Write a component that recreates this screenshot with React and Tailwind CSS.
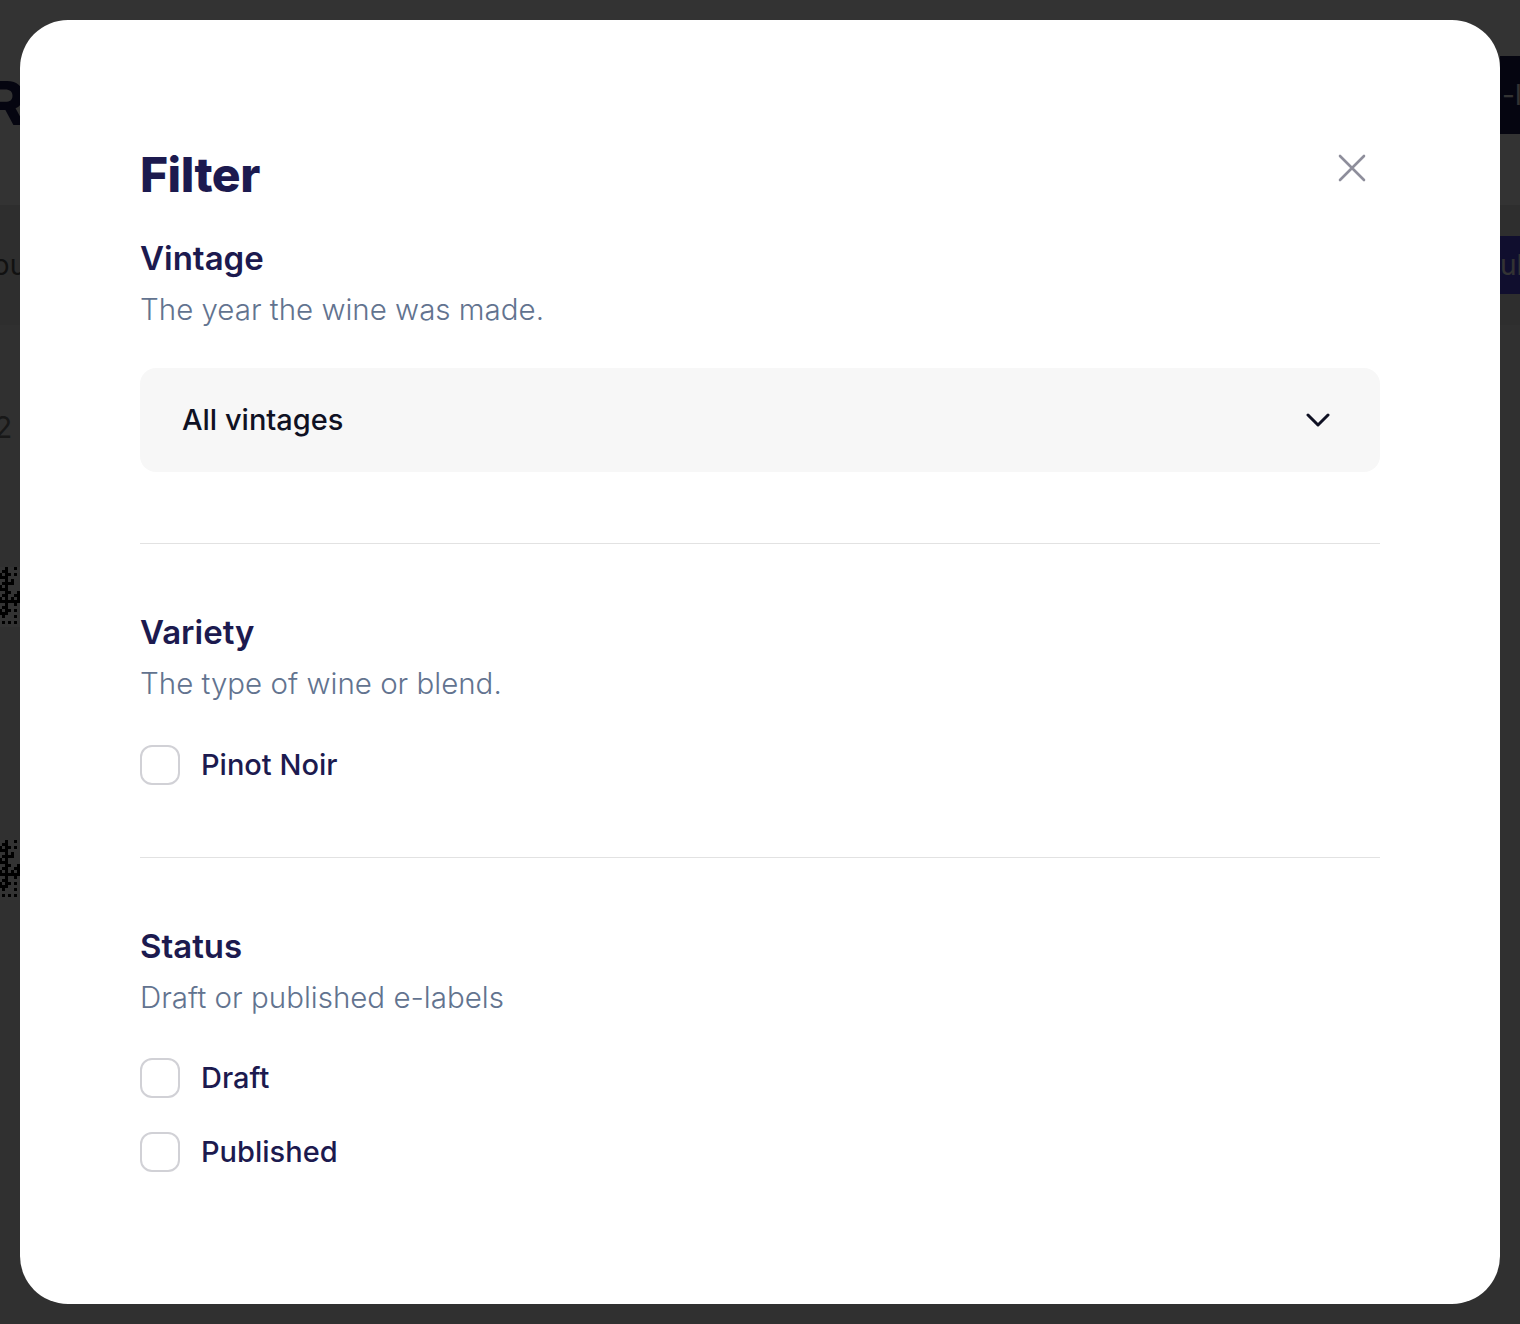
import React, { useState } from 'react';

const font = { fontFamily: 'Inter, "Noto Sans", sans-serif' };

const QrBlock = () => {
    // little pseudo-random pattern standing in for a QR code
    const cells = [];
    for (let y = 0; y < 20; y++) {
        for (let x = 0; x < 20; x++) {
            if ((x * 7 + y * 13 + x * y * 3 + (x ^ y)) % 3 === 0) cells.push(<rect key={`${x}-${y}`} x={x * 3} y={y * 3} width="3" height="3" fill="#000" />);
        }
    }
    return (
        <svg width="60" height="60" viewBox="0 0 60 60" className="shrink-0">
            <rect width="60" height="60" fill="#fff" />
            {cells}
        </svg>
    );
};

const Checkbox = ({ label, checked, onChange }) => (
    <label className="flex items-center gap-[21px] cursor-pointer select-none">
        <span
            onClick={onChange}
            className={`w-[40px] h-[40px] rounded-[12px] border-2 ${checked ? 'border-[#1c1a4f] bg-[#1c1a4f]' : 'border-[#d1d1d6] bg-white'}`}
        />
        <span className="text-[29px] leading-[40px] font-medium text-[#1c1a4f]">{label}</span>
    </label>
);

const Section = ({ title, description, children }) => (
    <div>
        <h3 className="text-[33px] leading-[40px] font-semibold text-[#1c1a4f]">{title}</h3>
        <p className="mt-[11px] text-[29.5px] leading-[40px] font-light text-[#62738f]">{description}</p>
        {children}
    </div>
);

const App = () => {
    const [checked, setChecked] = useState({});
    const toggle = (key) => setChecked((prev) => ({ ...prev, [key]: !prev[key] }));

    return (
        <div className="relative w-[1520px] h-[1324px] overflow-hidden bg-[#f0f0f0]" style={font}>
            {/* page behind the modal */}
            <div className="h-[205px] bg-white flex items-center justify-between">
                <span className="-ml-[14px] text-[60px] font-extrabold text-[#1c1a4f]">R</span>
                <div className="h-[78px] w-[120px] -mr-[100px] -mt-[16px] bg-[#1c1a4f] text-white text-[28px] flex items-center pl-[2px]">-label</div>
            </div>
            <div className="h-[120px] bg-[#e6e6e6] flex items-center justify-between">
                <span className="-ml-[24px] text-[28px] text-[#555]">Your</span>
                <div className="h-[58px] w-[140px] -mr-[120px] bg-[#4f46e5] text-white text-[28px] flex items-center">ublish</div>
            </div>
            <div className="pt-[80px]">
                <span className="-ml-[6px] text-[30px] text-[#777]">2</span>
            </div>
            <div className="mt-[117px] -ml-[40px]"><QrBlock /></div>
            <div className="mt-[213px] -ml-[40px]"><QrBlock /></div>

            {/* overlay */}
            <div className="absolute inset-0 bg-black/80 p-[20px]">
                <div className="h-full bg-white rounded-[48px] px-[120px] pt-[127px]">
                    <div className="flex items-start justify-between">
                        <h2 className="text-[48px] leading-[56px] font-extrabold text-[#1c1a4f] tracking-[-0.5px]">Filter</h2>
                        <button className="mt-[7px] mr-[14px]" aria-label="Close">
                            <svg width="28" height="28" viewBox="0 0 28 28" fill="none" stroke="#8e8e9b" strokeWidth="2.6" strokeLinecap="round">
                                <path d="M2 2L26 26M26 2L2 26" />
                            </svg>
                        </button>
                    </div>

                    <div className="mt-[35px]">
                        <Section title="Vintage" description="The year the wine was made.">
                            <div className="mt-[39px] h-[104px] rounded-[16px] bg-[#f7f7f7] flex items-center justify-between pl-[42px] pr-[50px]">
                                <span className="text-[29px] leading-[40px] font-medium text-[#0f1123]">All vintages</span>
                                <svg width="24" height="14" viewBox="0 0 24 14" fill="none" stroke="#0f1123" strokeWidth="3" strokeLinecap="round" strokeLinejoin="round">
                                    <path d="M2 2L12 12L22 2" />
                                </svg>
                            </div>
                        </Section>
                    </div>

                    <div className="mt-[71px] h-px bg-[#e2e2e2]" />

                    <div className="mt-[68px]">
                        <Section title="Variety" description="The type of wine or blend.">
                            <div className="mt-[42px]">
                                <Checkbox label="Pinot Noir" checked={!!checked.pinot} onChange={() => toggle('pinot')} />
                            </div>
                        </Section>
                    </div>

                    <div className="mt-[72px] h-px bg-[#e2e2e2]" />

                    <div className="mt-[68px]">
                        <Section title="Status" description="Draft or published e-labels">
                            <div className="mt-[41px] flex flex-col gap-[34px]">
                                <Checkbox label="Draft" checked={!!checked.draft} onChange={() => toggle('draft')} />
                                <Checkbox label="Published" checked={!!checked.published} onChange={() => toggle('published')} />
                            </div>
                        </Section>
                    </div>
                </div>
            </div>
        </div>
    );
};

export default App;
